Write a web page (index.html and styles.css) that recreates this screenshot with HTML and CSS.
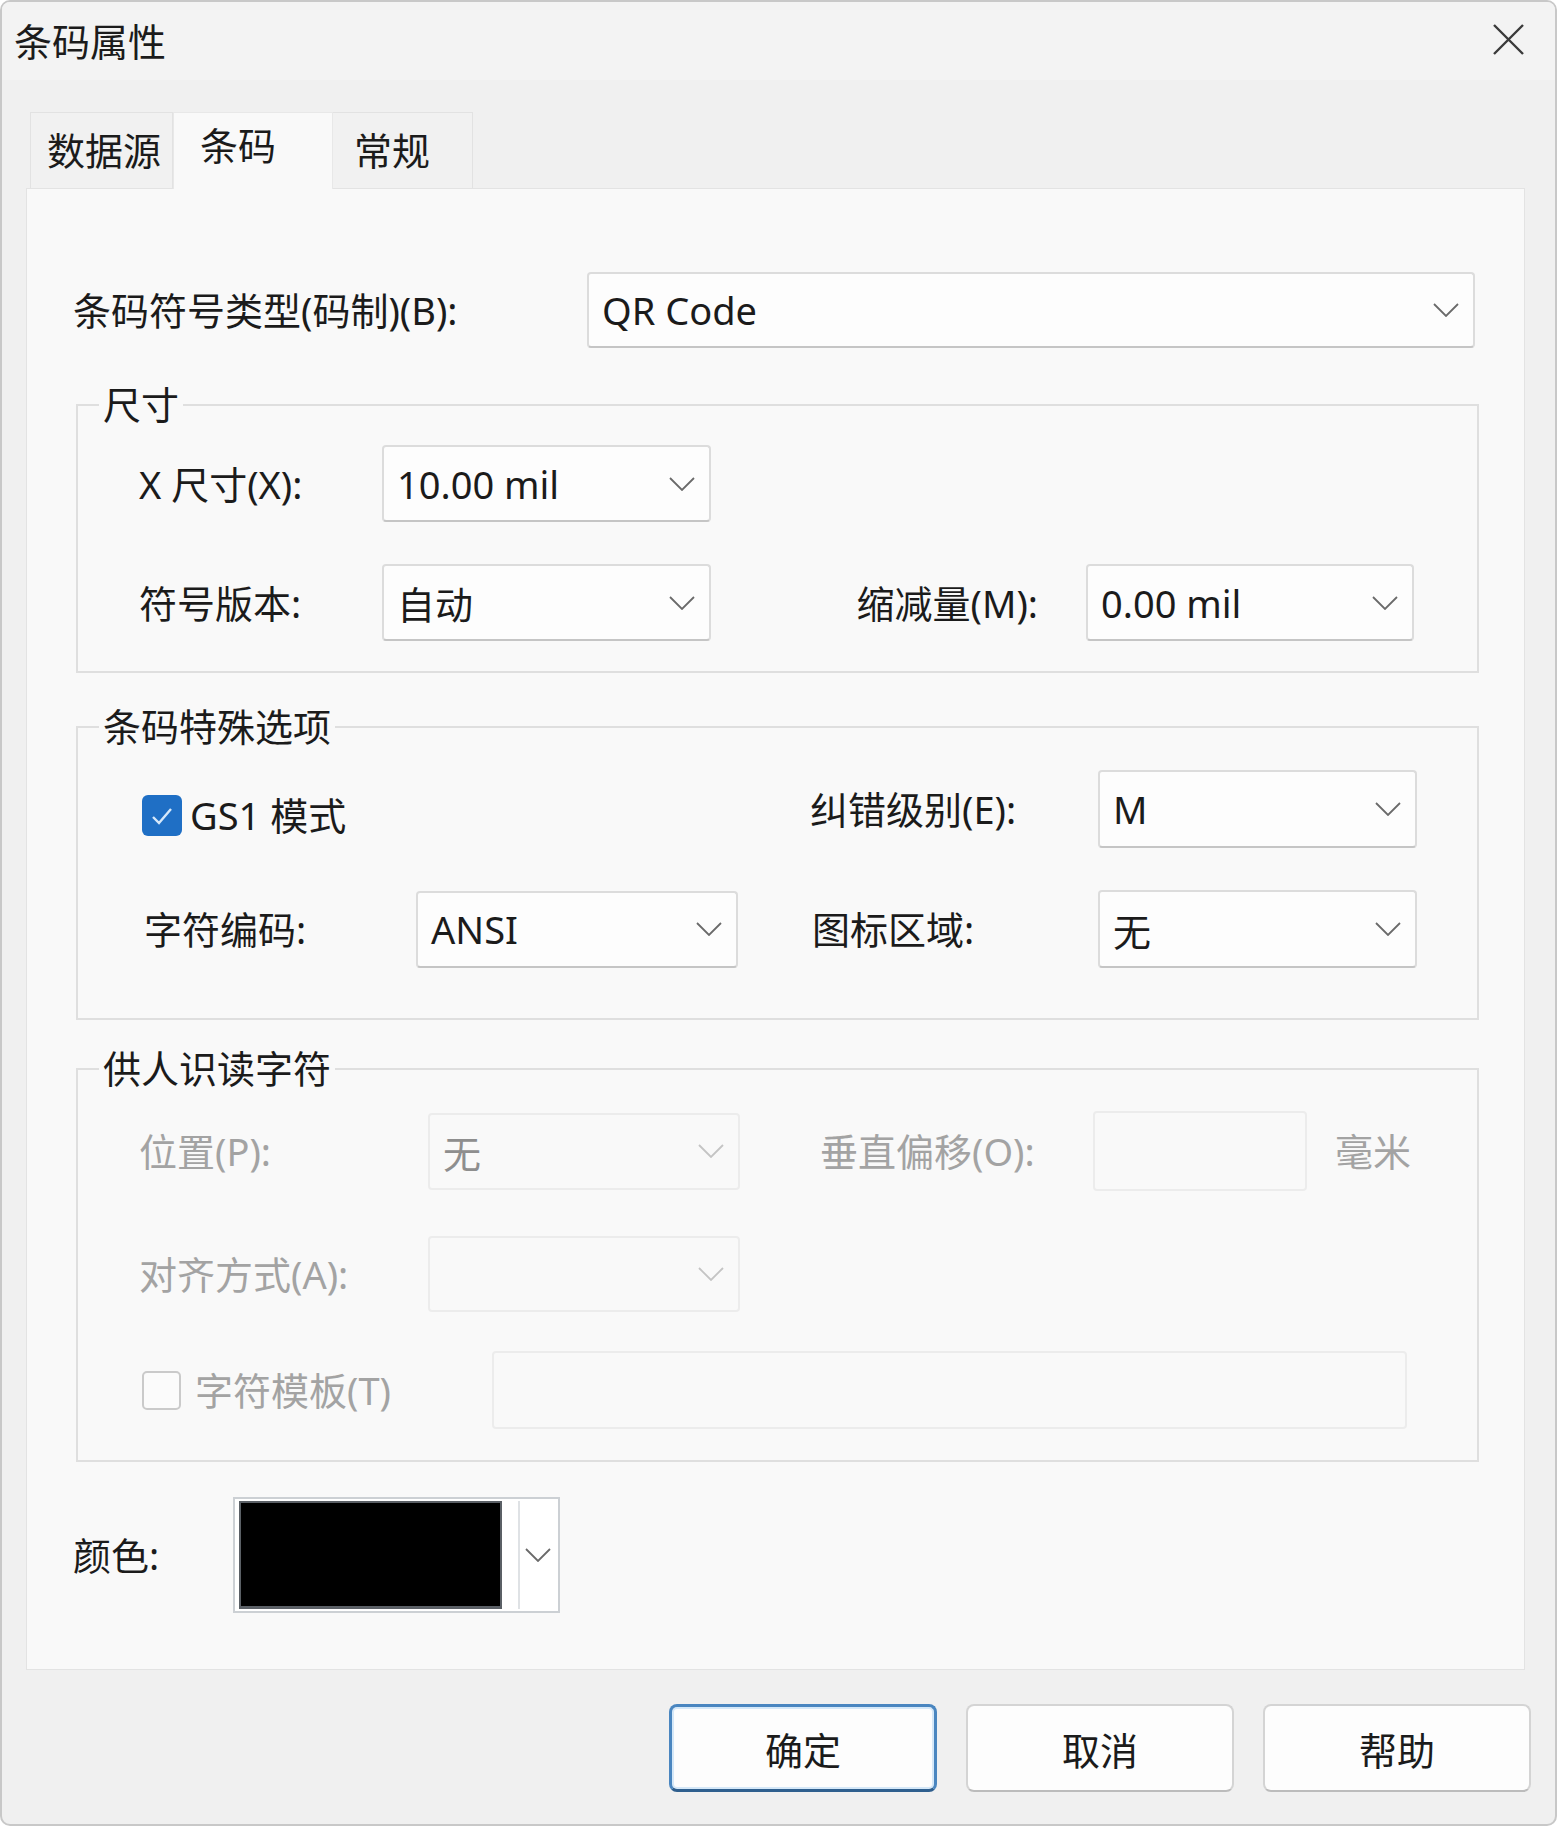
FILE: index.html
```html
<!DOCTYPE html>
<html lang="zh-CN">
<head>
    <meta charset="UTF-8">
    <title>条码属性</title>
    <link rel="stylesheet" href="styles.css">
</head>
<body>

<div class="dialog">
    <div class="titlebar">
        <span class="title">条码属性</span>
        <button class="btn-close" title="关闭">
            <svg width="33" height="33" viewBox="0 0 33 33"><path d="M2 2L31 31M31 2L2 31" stroke="#3a3a3a" stroke-width="2.4" fill="none"/></svg>
        </button>
    </div>

    <div class="tabs">
        <div class="tab tab-data">数据源</div>
        <div class="tab tab-barcode active">条码</div>
        <div class="tab tab-general">常规</div>
    </div>

    <div class="panel">
        <div class="row">
            <label class="lbl lbl-type">条码符号类型(码制)(B):</label>
            <div class="combo combo-type">
                <span>QR Code</span>
                <svg class="chev" width="26" height="14" viewBox="0 0 26 14"><path d="M1 1L13 13L25 1"/></svg>
            </div>
        </div>

        <div class="group group-size">
            <span class="group-title">尺寸</span>
            <div class="row">
                <label class="lbl lbl-size">X 尺寸(X):</label>
                <div class="combo combo-size">
                    <span>10.00 mil</span>
                    <svg class="chev" width="26" height="14" viewBox="0 0 26 14"><path d="M1 1L13 13L25 1"/></svg>
                </div>
            </div>
            <div class="row row-gap-42">
                <label class="lbl lbl-size">符号版本:</label>
                <div class="combo combo-size">
                    <span>自动</span>
                    <svg class="chev" width="26" height="14" viewBox="0 0 26 14"><path d="M1 1L13 13L25 1"/></svg>
                </div>
                <label class="lbl lbl-shrink">缩减量(M):</label>
                <div class="combo combo-shrink">
                    <span>0.00 mil</span>
                    <svg class="chev" width="26" height="14" viewBox="0 0 26 14"><path d="M1 1L13 13L25 1"/></svg>
                </div>
            </div>
        </div>

        <div class="group group-special">
            <span class="group-title">条码特殊选项</span>
            <div class="row">
                <div class="check-gs1">
                    <span class="checkbox checked">
                        <svg width="40" height="40" viewBox="0 0 40 40"><path d="M11 21L17 27L29 13" stroke="#d6e8fa" stroke-width="2.4" fill="none"/></svg>
                    </span>
                    <span class="check-text">GS1 模式</span>
                </div>
                <label class="lbl lbl-ecc">纠错级别(E):</label>
                <div class="combo combo-ecc">
                    <span>M</span>
                    <svg class="chev" width="26" height="14" viewBox="0 0 26 14"><path d="M1 1L13 13L25 1"/></svg>
                </div>
            </div>
            <div class="row row-gap-42">
                <label class="lbl lbl-enc">字符编码:</label>
                <div class="combo combo-enc">
                    <span>ANSI</span>
                    <svg class="chev" width="26" height="14" viewBox="0 0 26 14"><path d="M1 1L13 13L25 1"/></svg>
                </div>
                <label class="lbl lbl-icon">图标区域:</label>
                <div class="combo combo-ecc">
                    <span>无</span>
                    <svg class="chev" width="26" height="14" viewBox="0 0 26 14"><path d="M1 1L13 13L25 1"/></svg>
                </div>
            </div>
        </div>

        <div class="group group-hri">
            <span class="group-title">供人识读字符</span>
            <div class="row">
                <label class="lbl lbl-pos disabled">位置(P):</label>
                <div class="combo combo-pos disabled">
                    <span>无</span>
                    <svg class="chev" width="26" height="14" viewBox="0 0 26 14"><path d="M1 1L13 13L25 1"/></svg>
                </div>
                <label class="lbl lbl-offset disabled">垂直偏移(O):</label>
                <div class="input input-offset"></div>
                <span class="lbl unit disabled">毫米</span>
            </div>
            <div class="row row-gap-45">
                <label class="lbl lbl-pos disabled">对齐方式(A):</label>
                <div class="combo combo-pos combo-align disabled">
                    <span></span>
                    <svg class="chev" width="26" height="14" viewBox="0 0 26 14"><path d="M1 1L13 13L25 1"/></svg>
                </div>
            </div>
            <div class="row row-gap-39">
                <span class="checkbox unchecked"></span>
                <label class="lbl lbl-template disabled">字符模板(T)</label>
                <div class="input input-template"></div>
            </div>
        </div>

        <div class="row row-color">
            <label class="lbl lbl-color">颜色:</label>
            <div class="color-picker">
                <span class="swatch"></span>
                <span class="color-drop">
                    <svg class="chev" width="26" height="14" viewBox="0 0 26 14"><path d="M1 1L13 13L25 1"/></svg>
                </span>
            </div>
        </div>
    </div>

    <div class="footer">
        <button class="btn btn-primary">确定</button>
        <button class="btn">取消</button>
        <button class="btn">帮助</button>
    </div>
</div>

</body>
</html>
```

FILE: styles.css
```css
* {
    box-sizing: border-box;
}

body {
    margin: 0;
    background: #ffffff;
    font-family: "Noto Sans", "Noto Sans CJK SC", sans-serif;
    font-size: 38px;
    color: #1b1b1b;
}

.dialog {
    width: 1557px;
    height: 1826px;
    border: 2px solid #c8c8c8;
    border-radius: 10px;
    background: #f0f0f0;
    overflow: hidden;
}

/* title bar */
.titlebar {
    height: 78px;
    display: flex;
    align-items: center;
    justify-content: space-between;
    padding: 0 30px 0 12px;
    background: #f3f3f3;
}

.title {
    line-height: 44px;
}

.btn-close {
    width: 33px;
    height: 33px;
    padding: 0;
    border: none;
    background: none;
    display: flex;
    margin-top: -3px;
}

/* tabs */
.tabs {
    display: flex;
    align-items: flex-start;
    height: 76px;
    margin: 32px 0 0 28px;
}

.tab {
    height: 76px;
    line-height: 74px;
    background: #f1f1f1;
    border: 1px solid #e2e2e2;
    border-bottom: none;
}

.tab-data {
    width: 143px;
    padding-left: 16px;
}

.tab-barcode {
    width: 160px;
    padding-left: 26px;
}

.tab-general {
    width: 140px;
    padding-left: 21px;
    border-left: none;
}

.tab.active {
    position: relative;
    z-index: 1;
    height: 77px;
    line-height: 64px;
    background: #f9f9f9;
    border-color: #e8e8e8;
}

/* tab page */
.panel {
    width: 1499px;
    height: 1482px;
    margin-left: 24px;
    padding: 83px 0 0 46px;
    background: #f9f9f9;
    border: 1px solid #e3e3e3;
}

.row {
    display: flex;
    align-items: center;
}

.row-gap-42 {
    margin-top: 42px;
}

.row-gap-45 {
    margin-top: 45px;
}

.row-gap-39 {
    margin-top: 39px;
}

.lbl {
    flex: none;
    line-height: 44px;
    white-space: nowrap;
}

.lbl.disabled {
    color: #a3a3a3;
}

.combo {
    flex: none;
    height: 77px;
    display: flex;
    align-items: center;
    justify-content: space-between;
    padding: 0 14px 0 13px;
    background: #fdfdfd;
    border: 2px solid #dcdcdc;
    border-bottom-color: #c5c5c5;
    border-radius: 4px;
    white-space: nowrap;
}

.chev {
    flex: none;
    fill: none;
    stroke: #6a6a6a;
    stroke-width: 1.8;
}

.combo.disabled {
    background: #f9f9f9;
    border-color: #ececec;
    color: #8e8e8e;
}

.combo.disabled .chev {
    stroke: #c4c4c4;
}

.input {
    flex: none;
    background: #f9f9f9;
    border: 2px solid #ececec;
    border-radius: 4px;
}

.lbl-type {
    width: 514px;
}

.combo-type {
    width: 888px;
    height: 76px;
}

/* group boxes */
.group {
    position: relative;
    width: 1403px;
    margin-left: 3px;
    border: 2px solid #dfdfdf;
    padding-left: 61px;
}

.group-title {
    position: absolute;
    top: -24px;
    left: 21px;
    padding: 0 4px;
    line-height: 44px;
    background: #f9f9f9;
}

.group-size {
    margin-top: 56px;
    padding-top: 39px;
    padding-bottom: 30px;
}

.group-special {
    margin-top: 53px;
    padding-top: 42px;
    padding-bottom: 50px;
}

.group-hri {
    margin-top: 48px;
    padding-top: 41px;
    padding-bottom: 31px;
}

.lbl-size {
    width: 243px;
}

.combo-size {
    width: 329px;
}

.lbl-shrink {
    width: 375px;
    padding-right: 48px;
    text-align: right;
}

.combo-shrink {
    width: 328px;
}

.check-gs1 {
    width: 671px;
    display: flex;
    align-items: center;
}

.checkbox {
    flex: none;
    display: block;
    width: 40px;
    height: 41px;
    margin-left: 3px;
    border-radius: 6px;
}

.checkbox.checked {
    background: #1f6fc5;
    margin-top: 12px;
}

.checkbox.unchecked {
    width: 39px;
    height: 39px;
    background: #fbfbfb;
    border: 2px solid #cacaca;
    border-radius: 5px;
}

.check-text {
    margin: 12px 0 0 8px;
    line-height: 44px;
}

.lbl-ecc {
    width: 288px;
}

.combo-ecc {
    width: 319px;
    height: 78px;
}

.lbl-enc {
    width: 277px;
    padding-left: 5px;
}

.combo-enc {
    width: 322px;
}

.lbl-icon {
    width: 288px;
    margin-left: 72px;
    padding-left: 2px;
}

.lbl-pos {
    width: 289px;
}

.combo-pos {
    width: 312px;
}

.combo-align {
    height: 76px;
}

.lbl-offset {
    width: 273px;
    margin-left: 80px;
}

.input-offset {
    width: 214px;
    height: 80px;
}

.unit {
    margin-left: 28px;
}

.lbl-template {
    width: 297px;
    margin-left: 14px;
}

.input-template {
    width: 915px;
    height: 78px;
}

/* colour */
.row-color {
    margin-top: 35px;
}

.lbl-color {
    width: 160px;
}

.color-picker {
    flex: none;
    width: 327px;
    height: 116px;
    display: flex;
    padding: 2px 0 2px 4px;
    background: #ffffff;
    border: 2px solid #ccd0d4;
}

.swatch {
    width: 263px;
    height: 108px;
    background: #000000;
    border: 2px solid #5b6066;
    border-bottom-width: 3px;
}

.color-drop {
    width: 38px;
    margin-left: 16px;
    display: flex;
    align-items: center;
    justify-content: center;
    border-left: 2px solid #dfe2e5;
}

/* buttons */
.footer {
    display: flex;
    justify-content: flex-end;
    gap: 29px;
    padding: 34px 24px 0 0;
}

.btn {
    width: 268px;
    height: 88px;
    padding: 0;
    font: inherit;
    color: #1b1b1b;
    background: #fdfdfd;
    border: 2px solid #d4d4d4;
    border-bottom-color: #bcbcbc;
    border-radius: 8px;
}

.btn-primary {
    border: 3px solid #4a86c0;
    border-bottom-color: #2f5f8e;
    box-shadow: inset 0 0 0 2px #d5e8f8;
}
```
